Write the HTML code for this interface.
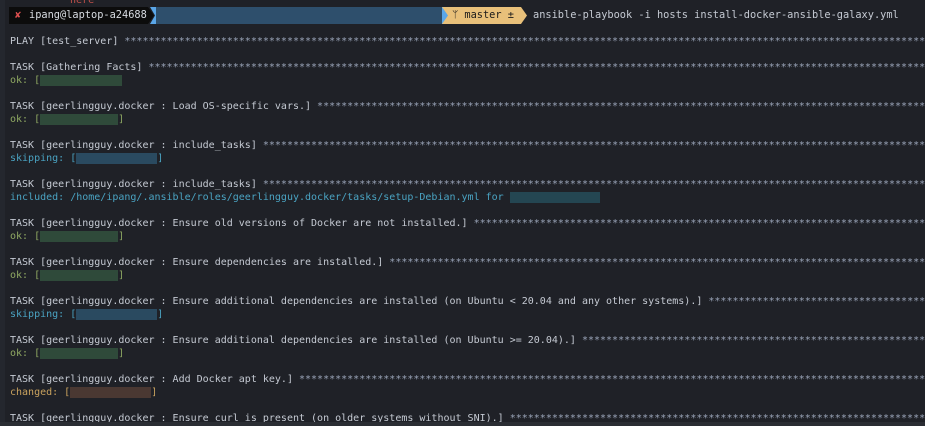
<!DOCTYPE html>
<html><head><style>
body{margin:0;width:925px;height:426px;overflow:hidden;background:#1f2127;font-family:"DejaVu Sans Mono","Liberation Mono",monospace;font-size:10px;color:#c5cad3;position:relative}
.strip{position:absolute;left:0;top:0;width:5px;height:426px;background:#24272e}
.l{position:absolute;left:10px;height:13px;line-height:13px;white-space:pre;width:915px;overflow:hidden}
.s{color:#9aa4b8}
.g{color:#8fa862}.c{color:#4aa3c2}.o{color:#c9a25e}
.b{display:inline-block;vertical-align:middle;height:11px}
.bg{background:#2f4a3a}.bb{background:#2a4a60}.bo{background:#4a3832}
</style></head><body>
<div class="strip"></div>
<div class="l" style="top:-6px;left:58px;color:#c0504a">" here</div>
<div style="position:absolute;left:9px;top:7px;width:139px;height:17px;background:#0c0c0c"></div>
<div style="position:absolute;left:15px;top:7px;line-height:17px;color:#e05050;font-size:10px">✘</div>
<div style="position:absolute;left:29px;top:7px;line-height:17px;color:#d8dce2;white-space:pre;font-size:10.3px">ipang@laptop-a24688</div>
<svg style="position:absolute;left:148px;top:7px" width="8" height="17"><polygon points="0,0 0,17 6,8.5" fill="#0c0c0c"/><polygon points="2,0 8,0 8,17 2,17 7,8.5" fill="#5aa6e8"/></svg>
<div style="position:absolute;left:156px;top:7px;width:286px;height:17px;background:#2e4f6c"></div>
<svg style="position:absolute;left:442px;top:7px" width="10" height="17"><rect width="10" height="17" fill="#e8c07a"/><polygon points="0,0 0,17 6,8.5" fill="#5aa6e8"/></svg>
<div style="position:absolute;left:452px;top:7px;width:69px;height:17px;background:#e8c07a;color:#1a1a1a;line-height:17px;white-space:pre;font-size:10.3px">ᛘ master ±</div>
<svg style="position:absolute;left:521px;top:7px" width="7" height="17"><polygon points="0,0 0,17 6,8.5" fill="#e8c07a"/></svg>
<div class="l" style="top:9px;left:533px;width:390px;font-size:10.3px">ansible-playbook -i hosts install-docker-ansible-galaxy.yml</div>

<div class="l" style="top:35px">PLAY [test_server] <span class="s">****************************************************************************************************************************************************************</span></div>

<div class="l" style="top:61px">TASK [Gathering Facts] <span class="s">****************************************************************************************************************************************************************</span></div>
<div class="l g" style="top:74px">ok: [<span class="b bg" style="width:82px"></span></div>

<div class="l" style="top:100px">TASK [geerlingguy.docker : Load OS-specific vars.] <span class="s">****************************************************************************************************************************************************************</span></div>
<div class="l g" style="top:113px">ok: [<span class="b bg" style="width:78px"></span>]</div>

<div class="l" style="top:139px">TASK [geerlingguy.docker : include_tasks] <span class="s">****************************************************************************************************************************************************************</span></div>
<div class="l c" style="top:152px">skipping: [<span class="b bb" style="width:81px"></span>]</div>

<div class="l" style="top:178px">TASK [geerlingguy.docker : include_tasks] <span class="s">****************************************************************************************************************************************************************</span></div>
<div class="l c" style="top:191px">included: /home/ipang/.ansible/roles/geerlingguy.docker/tasks/setup-Debian.yml for <span class="b bb" style="width:90px;background:#244652"></span></div>

<div class="l" style="top:217px">TASK [geerlingguy.docker : Ensure old versions of Docker are not installed.] <span class="s">****************************************************************************************************************************************************************</span></div>
<div class="l g" style="top:230px">ok: [<span class="b bg" style="width:78px"></span>]</div>

<div class="l" style="top:256px">TASK [geerlingguy.docker : Ensure dependencies are installed.] <span class="s">****************************************************************************************************************************************************************</span></div>
<div class="l g" style="top:269px">ok: [<span class="b bg" style="width:78px"></span>]</div>

<div class="l" style="top:295px">TASK [geerlingguy.docker : Ensure additional dependencies are installed (on Ubuntu &lt; 20.04 and any other systems).] <span class="s">****************************************************************************************************************************************************************</span></div>
<div class="l c" style="top:308px">skipping: [<span class="b bb" style="width:81px"></span>]</div>

<div class="l" style="top:334px">TASK [geerlingguy.docker : Ensure additional dependencies are installed (on Ubuntu &gt;= 20.04).] <span class="s">****************************************************************************************************************************************************************</span></div>
<div class="l g" style="top:347px">ok: [<span class="b bg" style="width:78px"></span>]</div>

<div class="l" style="top:373px">TASK [geerlingguy.docker : Add Docker apt key.] <span class="s">****************************************************************************************************************************************************************</span></div>
<div class="l o" style="top:386px">changed: [<span class="b bo" style="width:81px"></span>]</div>

<div class="l" style="top:412px">TASK [geerlingguy.docker : Ensure curl is present (on older systems without SNI).] <span class="s">****************************************************************************************************************************************************************</span></div>
<div style="position:absolute;left:0;top:422px;width:925px;height:4px;background:#2a2d33"></div>
</body></html>
